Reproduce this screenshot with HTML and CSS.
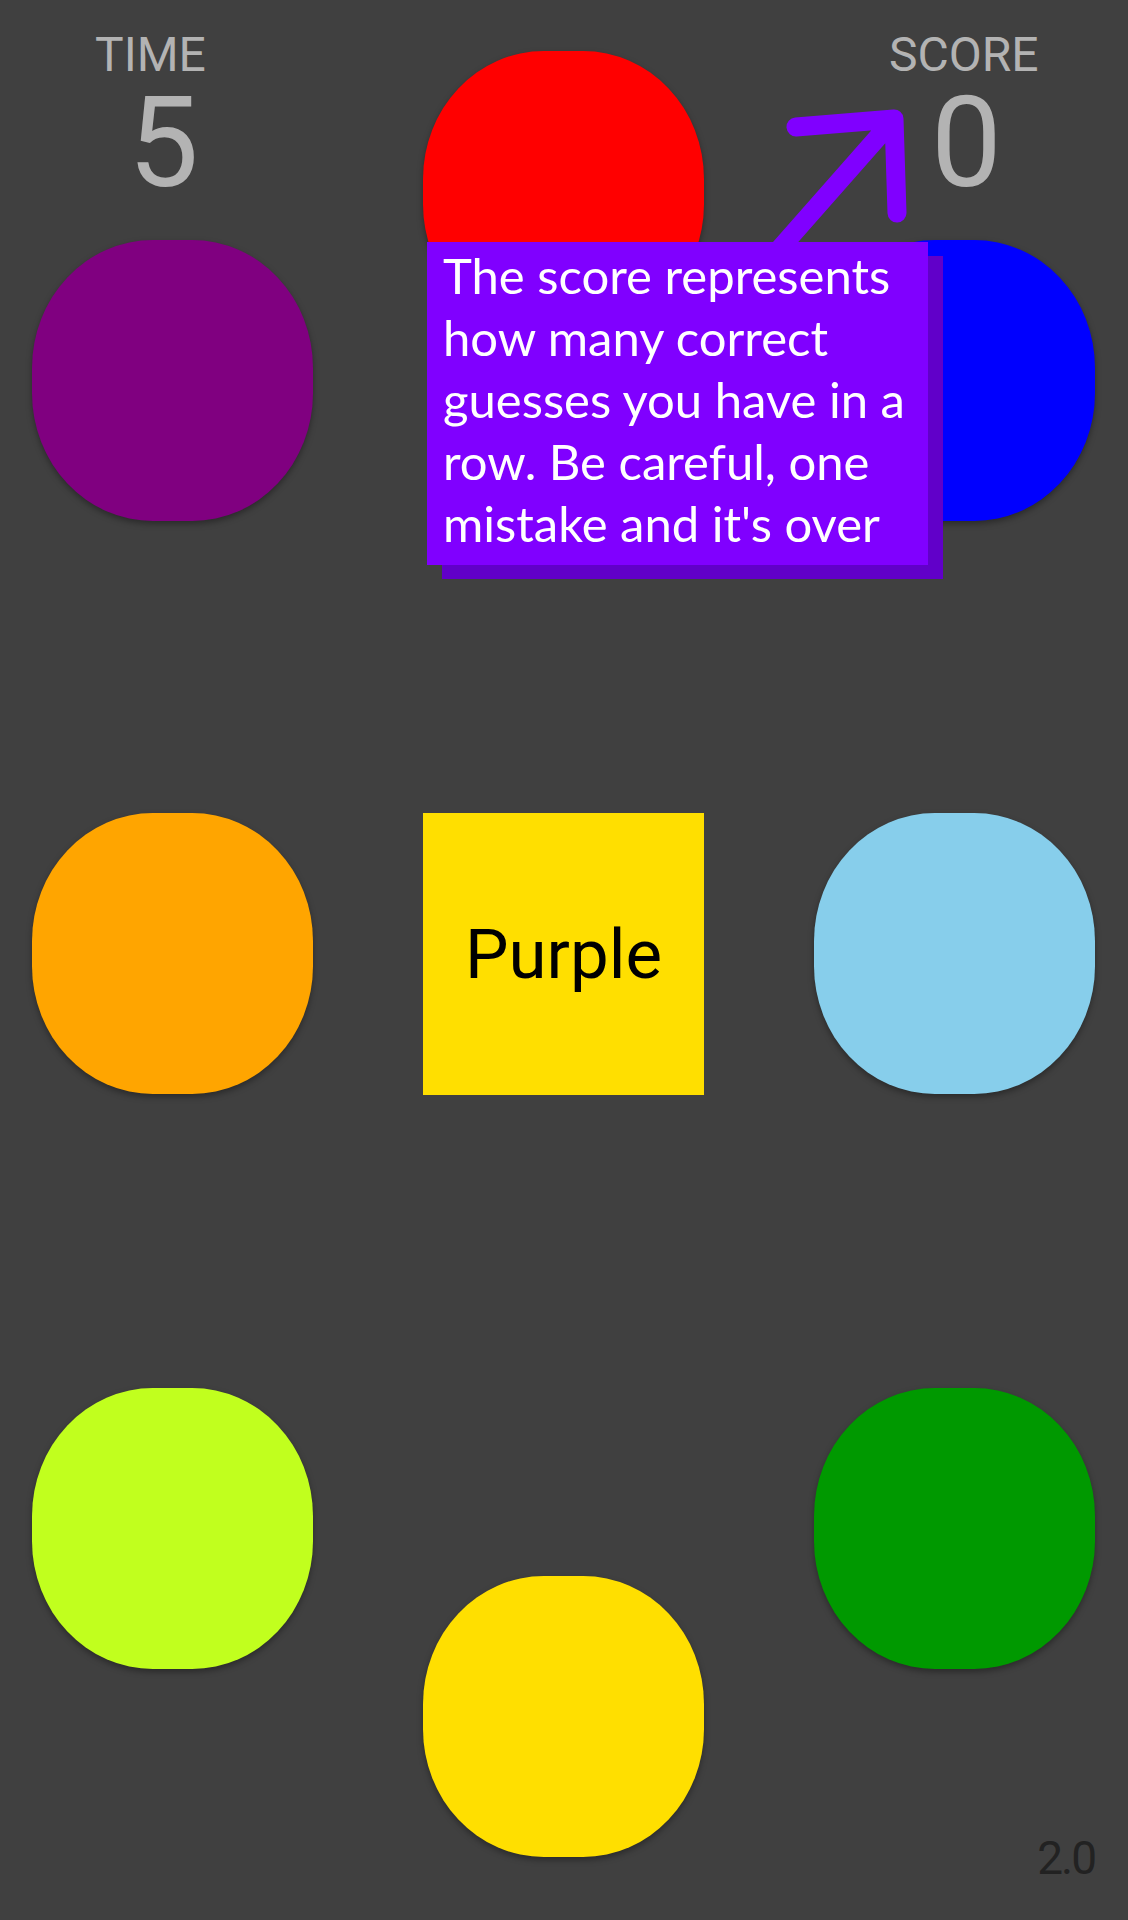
FILE: index.html
```html
<!DOCTYPE html>
<html lang="en">
<head>
  <meta charset="UTF-8" />
  <title>Color Guess</title>
  <link rel="stylesheet" href="styles.css">
</head>
<body>
  <div class="board">
    <div class="column left">
      <div class="stat time">
        <div class="stat-label">TIME</div>
        <div class="stat-value">5</div>
      </div>
      <div class="blob purple"></div>
      <div class="blob orange"></div>
      <div class="blob lime"></div>
    </div>

    <div class="column middle">
      <div class="blob red"></div>
      <div class="word-card">Purple</div>
      <div class="blob yellow"></div>
    </div>

    <div class="column right">
      <div class="stat score">
        <div class="stat-label">SCORE</div>
        <div class="stat-value">0</div>
      </div>
      <div class="blob blue"></div>
      <div class="blob skyblue"></div>
      <div class="blob green"></div>
      <div class="version">2.0</div>
    </div>

    <!-- tutorial hint over the score -->
    <svg class="hint-arrow" width="1128" height="300" viewBox="0 0 1128 300">
      <path d="M768 262 L894 119 M796 127 L894 119 L897 213" fill="none" stroke="#8000ff" stroke-width="19" stroke-linecap="round" stroke-linejoin="round"/>
    </svg>
    <div class="hint">
      The score represents<br>
      how many correct<br>
      guesses you have in a<br>
      row. Be careful, one<br>
      mistake and it's over
    </div>
  </div>
</body>
</html>
```

FILE: styles.css
```css
body {
  background-color: #404040;
  margin: 0;
  font-family: Roboto, 'Liberation Sans', sans-serif;
}

.board {
  position: relative;
  display: flex;
  gap: 110px;
  padding-left: 32px;
  height: 1920px;
  box-sizing: border-box;
}

.column {
  width: 281px;
  display: flex;
  flex-direction: column;
}

.left, .right {
  padding-top: 31px;
}

.middle {
  padding-top: 51px;
}

.blob {
  width: 281px;
  height: 281px;
  border-radius: 43% / 45.5%;
  box-shadow: 0 3px 6px rgba(0, 0, 0, 0.35);
  flex-shrink: 0;
}

.purple { background: #800080; margin-top: 34px; }
.blue { background: #0000ff; margin-top: 34px; }
.orange { background: #ffa500; margin-top: 292px; }
.skyblue { background: #87ceeb; margin-top: 292px; }
.lime { background: #c1ff1e; margin-top: 294px; }
.green { background: #009900; margin-top: 294px; }
.red { background: #ff0000; }
.yellow { background: #ffdf00; margin-top: 481px; }

.word-card {
  width: 281px;
  height: 282px;
  margin-top: 481px;
  background: #ffdf00;
  color: #000;
  font-size: 69px;
  display: flex;
  align-items: center;
  justify-content: center;
  flex-shrink: 0;
}

.stat {
  color: #b3b3b3;
}

.stat-label {
  font-size: 48px;
  line-height: 48px;
}

.stat-value {
  font-size: 126px;
  line-height: 126px;
  margin-top: 1px;
}

.time .stat-label { margin-left: 63px; }
.time .stat-value { margin-left: 96px; }
.score .stat-label { margin-left: 75px; }
.score .stat-value { margin-left: 117px; }

.version {
  margin-top: 162px;
  text-align: right;
  font-size: 46px;
  color: #222;
  letter-spacing: -2px;
}

.hint-arrow {
  position: absolute;
  left: 0;
  top: 0;
}

.hint {
  position: absolute;
  left: 427px;
  top: 242px;
  width: 501px;
  height: 323px;
  box-sizing: border-box;
  padding: 2px 0 0 16px;
  background: #8000ff;
  box-shadow: 15px 14px 0 #6100c9;
  color: #fff;
  font-family: Lato, 'Open Sans', sans-serif;
  font-size: 49px;
  line-height: 62px;
  white-space: nowrap;
}
```
